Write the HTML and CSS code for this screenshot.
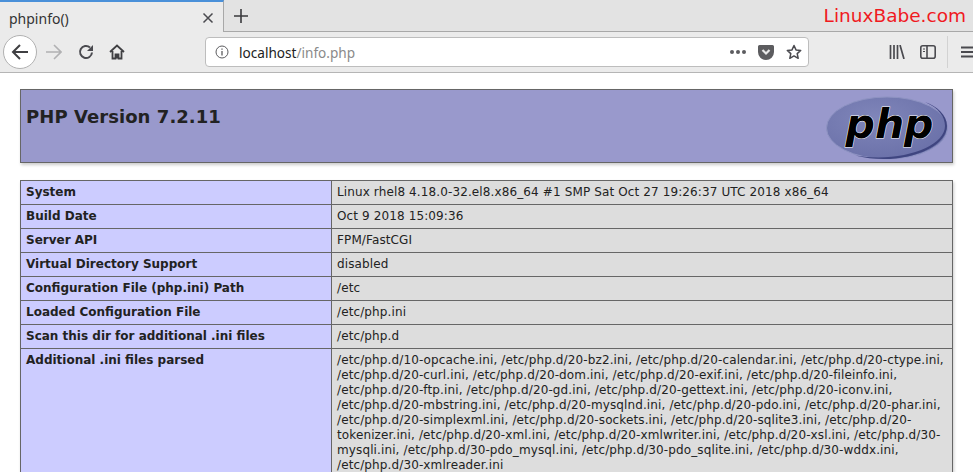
FILE: index.html
```html
<!DOCTYPE html>
<html lang="en">
<head>
<meta charset="utf-8">
<title>phpinfo()</title>
<link rel="stylesheet" href="styles.css">
</head>
<body>
<div class="tabstrip">
  <div class="tab">
    <span class="tab-title">phpinfo()</span>
    <svg class="tab-close" width="12" height="12" viewBox="0 0 12 12"><path d="M1.500 1.500l9 9M10.500 1.500l-9 9" stroke="#4a4a4f" stroke-width="1.500" fill="none"/></svg>
  </div>
  <svg class="newtab" width="16" height="16" viewBox="0 0 16 16"><path d="M8 1v14M1 8h14" stroke="#3a3a3d" stroke-width="1.600" fill="none"/></svg>
  <div class="brand">LinuxBabe.com</div>
</div>
<div class="navbar">
  <div class="back">
    <svg width="18" height="18" viewBox="0 0 18 18"><path d="M17 9H2M9 2L2 9l7 7" stroke="#3f3f42" stroke-width="2" fill="none"/></svg>
  </div>
  <svg class="forward" width="17" height="16" viewBox="0 0 17 16"><path d="M1 8h15M9 1l7 7-7 7" stroke="#b1b1b3" stroke-width="1.600" fill="none"/></svg>
  <svg class="reload" width="16" height="16" viewBox="0 0 16 16"><path d="M14 8.500A6 6 0 1 1 12 3.500" stroke="#4a4a4f" stroke-width="2" fill="none"/><path d="M15 1v6H9z" fill="#4a4a4f"/></svg>
  <svg class="home" width="16" height="16" viewBox="0 0 16 16"><path d="M1 8l7-6.500 7 6.500M3.500 7v7.500h3v-4h3v4h3V7" stroke="#3f3f42" stroke-width="1.800" fill="none"/><path d="M6.500 10.500h3v4h-3z" fill="#3f3f42"/></svg>
  <div class="urlbar">
    <svg class="info" width="14" height="14" viewBox="0 0 14 14"><circle cx="7" cy="7" r="6" stroke="#5c5c5f" fill="none"/><path d="M7 6v4.500M7 3.500v1.300" stroke="#5c5c5f" stroke-width="1.300"/></svg>
    <span class="url"><span class="host">localhost</span>/info.php</span>
    <span class="dots"><i></i><i></i><i></i></span>
    <svg class="pocket" width="16" height="15" viewBox="0 0 16 15"><path d="M1.500 0h13A1.500 1.500 0 0 1 16 1.500V7A8 8 0 0 1 0 7V1.500A1.500 1.500 0 0 1 1.500 0z" fill="#5c5c5f"/><path d="M4.500 5L8 8.500 11.500 5" stroke="#e8e8e8" stroke-width="2.200" fill="none"/></svg>
    <svg class="star" width="16" height="16" viewBox="0 0 16 16"><path d="M8 1.500l2 4.400 4.700.5-3.500 3.200 1 4.700L8 11.900l-4.200 2.400 1-4.700L1.300 6.400 6 5.900z" stroke="#4a4a4f" stroke-width="1.500" stroke-linejoin="round" fill="none"/></svg>
  </div>
  <svg class="library" width="16" height="14" viewBox="0 0 16 14"><path d="M1.500 0v14M5 0v14M8.500 0v14M11 0l4 14" stroke="#4a4a4f" stroke-width="1.700" fill="none"/></svg>
  <svg class="sidebar" width="16" height="14" viewBox="0 0 16 14"><rect x=".8" y=".8" width="14.400" height="12.400" rx="2" stroke="#4a4a4f" stroke-width="1.600" fill="none"/><path d="M7 1v12" stroke="#4a4a4f" stroke-width="1.600"/><path d="M3 4h2M3 6.500h2" stroke="#4a4a4f"/></svg>
  <span class="sep"></span>
  <svg class="menu" width="14" height="12" viewBox="0 0 14 12"><path d="M0 1.500h14M0 6h14M0 10.500h14" stroke="#4a4a4f" stroke-width="1.800"/></svg>
</div>
<main class="page">
  <div class="header">
    <h1>PHP Version 7.2.11</h1>
    <svg class="logo" width="124" height="70" viewBox="0 0 124 70">
      <defs><radialGradient id="lg" cx="40%" cy="35%" r="70%"><stop offset="0" stop-color="#8086ba"/><stop offset="1" stop-color="#6a70a8"/></radialGradient></defs>
      <ellipse cx="62" cy="35" rx="60.500" ry="31" fill="url(#lg)" stroke="#8e93c2"/>
      <path d="M30 62.500C75 74 122 56 122 33 122 22 112 13 100 9 114 15 120 24 120 33 120 54 76 70 30 62.500z" fill="#3f4580"/>
      <text class="logo-text" x="64.500" y="45" text-anchor="middle">php</text>
    </svg>
  </div>
  <table class="info-table">
    <tr><td class="e">System</td><td class="v">Linux rhel8 4.18.0-32.el8.x86_64 #1 SMP Sat Oct 27 19:26:37 UTC 2018 x86_64</td></tr>
    <tr><td class="e">Build Date</td><td class="v">Oct 9 2018 15:09:36</td></tr>
    <tr><td class="e">Server API</td><td class="v">FPM/FastCGI</td></tr>
    <tr><td class="e">Virtual Directory Support</td><td class="v">disabled</td></tr>
    <tr><td class="e">Configuration File (php.ini) Path</td><td class="v">/etc</td></tr>
    <tr><td class="e">Loaded Configuration File</td><td class="v">/etc/php.ini</td></tr>
    <tr><td class="e">Scan this dir for additional .ini files</td><td class="v">/etc/php.d</td></tr>
    <tr><td class="e">Additional .ini files parsed</td><td class="v">/etc/php.d/10-opcache.ini, /etc/php.d/20-bz2.ini, /etc/php.d/20-calendar.ini, /etc/php.d/20-ctype.ini, /etc/php.d/20-curl.ini, /etc/php.d/20-dom.ini, /etc/php.d/20-exif.ini, /etc/php.d/20-fileinfo.ini, /etc/php.d/20-ftp.ini, /etc/php.d/20-gd.ini, /etc/php.d/20-gettext.ini, /etc/php.d/20-iconv.ini, /etc/php.d/20-mbstring.ini, /etc/php.d/20-mysqlnd.ini, /etc/php.d/20-pdo.ini, /etc/php.d/20-phar.ini, /etc/php.d/20-simplexml.ini, /etc/php.d/20-sockets.ini, /etc/php.d/20-sqlite3.ini, /etc/php.d/20-tokenizer.ini, /etc/php.d/20-xml.ini, /etc/php.d/20-xmlwriter.ini, /etc/php.d/20-xsl.ini, /etc/php.d/30-mysqli.ini, /etc/php.d/30-pdo_mysql.ini, /etc/php.d/30-pdo_sqlite.ini, /etc/php.d/30-wddx.ini, /etc/php.d/30-xmlreader.ini</td></tr>
  </table>
</main>
</body>
</html>
```

FILE: styles.css
```css
* { box-sizing: border-box; }
html, body { margin: 0; height: 100%; overflow: hidden; background: #fff; }
body { width: 973px; height: 472px; font-family: "DejaVu Sans", sans-serif; }

.tabstrip { display: flex; align-items: center; height: 32px; background: #e3e3e3; border-bottom: 1px solid #a8a8a8; }
.tab { display: flex; align-items: center; justify-content: space-between; width: 224px; height: 32px; padding: 2px 9px 0 9px; background: #ebebeb; border-top: 2px solid #4a90d9; border-right: 1px solid #a8a8a8; margin-bottom: -1px; }
.tab-title { font-family: "Noto Sans", sans-serif; font-size: 14px; color: #333; }
.newtab { margin-left: 9px; }
.brand { margin-left: auto; margin-right: 7px; font-size: 18.500px; color: #f01a1f; }

.navbar { display: flex; align-items: center; height: 41px; background: #ebebeb; border-bottom: 1px solid #b5b5b5; padding-left: 3px; overflow: hidden; }
.navbar > * { flex: none; }
.back { display: flex; align-items: center; justify-content: center; width: 34px; height: 34px; border: 1px solid #b1b1b1; border-radius: 50%; background: #fff; }
.forward { margin-left: 8px; }
.reload { margin-left: 16px; }
.home { margin-left: 15px; }
.urlbar { display: flex; align-items: center; width: 604px; height: 30px; margin-left: 80px; padding: 0 6px 0 9px; background: #fff; border: 1px solid #bdbdbd; border-radius: 4px; }
.url { margin-left: 10px; font-family: "Noto Sans", sans-serif; font-size: 13.600px; color: #8a8a8a; }
.host { color: #222; }
.dots { display: flex; gap: 2px; margin-left: auto; }
.dots i { width: 4px; height: 4px; border-radius: 50%; background: #5c5c5f; }
.pocket { margin-left: 12px; }
.star { margin-left: 12px; }
.library { margin-left: 80px; }
.sidebar { margin-left: 15px; }
.sep { width: 1px; height: 32px; margin-left: 11px; background: #d2d2d2; }
.menu { margin-left: 13px; }

.page { padding: 16px 20px 0; }
.header { display: flex; justify-content: space-between; width: 933px; height: 74px; padding: 0 3px 0 5px; background: #9999cc; border: 1px solid #666; box-shadow: 1px 2px 3px #ccc; }
h1 { margin: 15px 0 0; font-size: 18px; line-height: 24px; font-weight: bold; color: #222; letter-spacing: .06px; }
.logo { flex: none; margin-top: 3px; }
.logo-text { font-family: "DejaVu Sans", sans-serif; font-size: 41px; font-weight: bold; font-style: italic; fill: #000; stroke: #fff; stroke-width: 1; paint-order: stroke; }

.info-table { width: 933px; margin-top: 17px; border-collapse: collapse; table-layout: fixed; font-size: 12px; box-shadow: 1px 2px 3px #ccc; }
.info-table td { border: 1px solid #666; padding: 4px 5px; vertical-align: top; line-height: 15px; color: #222; }
.e { width: 311px; background: #ccccff; font-weight: bold; }
.v { background: #dddddd; letter-spacing: .12px; }
```
